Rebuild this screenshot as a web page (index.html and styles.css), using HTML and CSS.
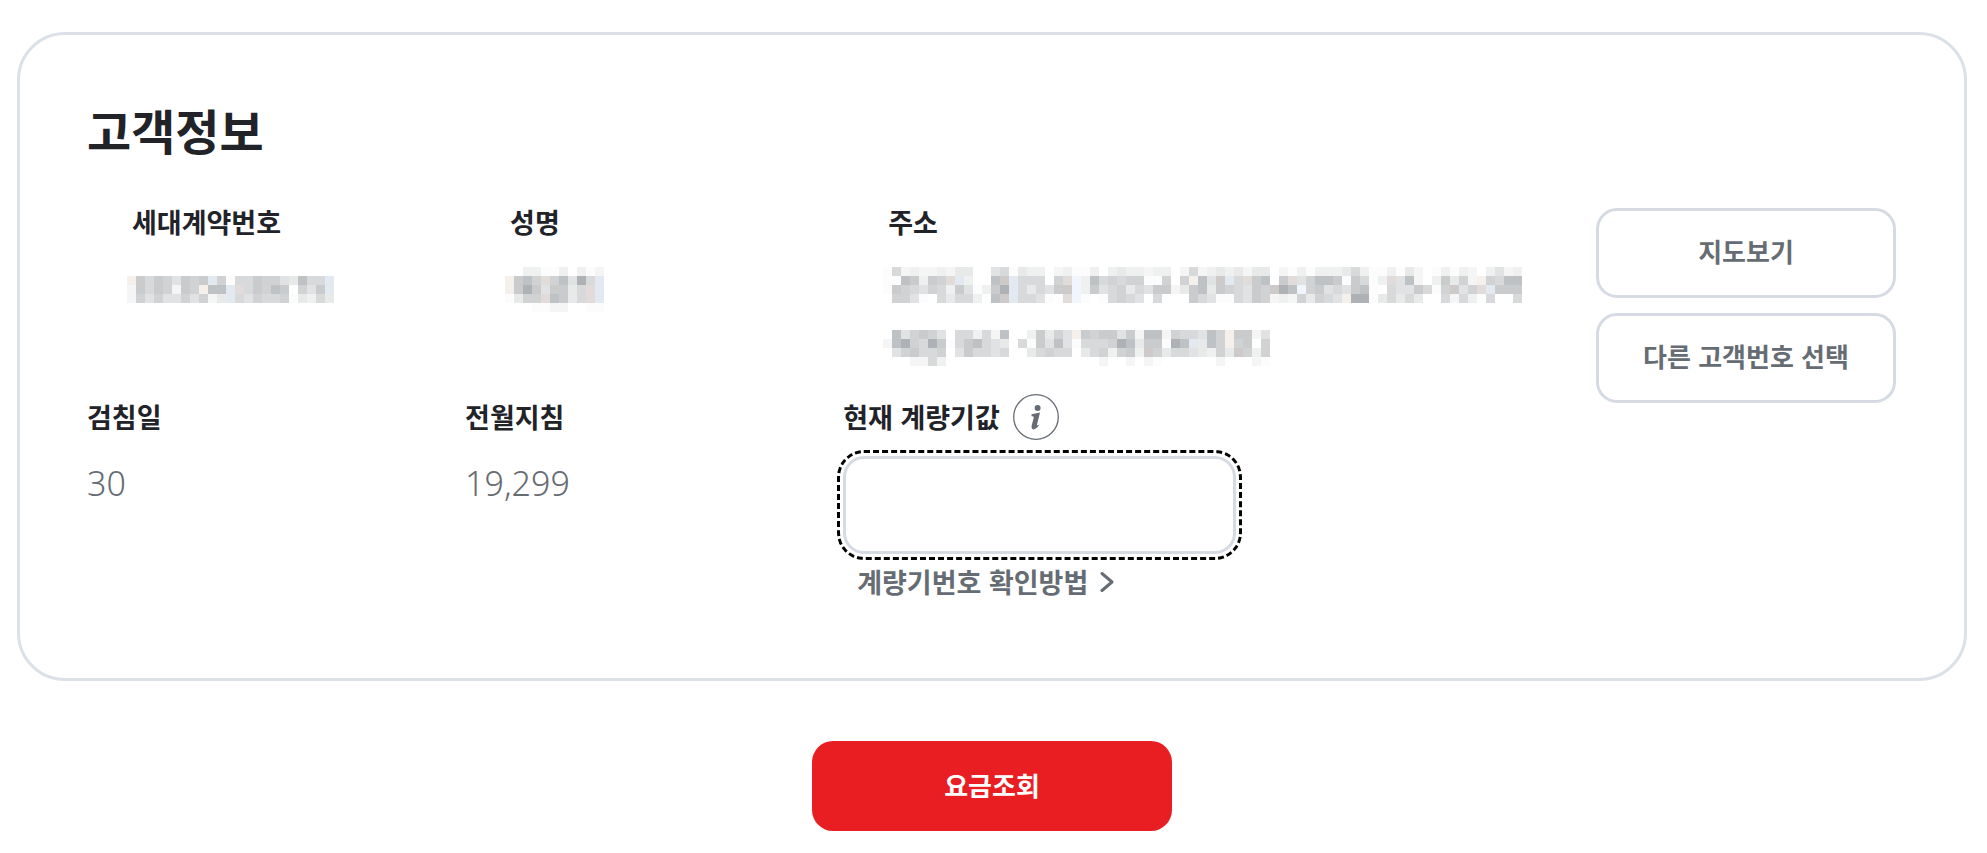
FILE: index.html
```
<!DOCTYPE html>
<html lang="ko">
<head>
    <meta charset="utf-8">
    <title>고객정보</title>
    <meta name="viewport" content="width=device-width, initial-scale=1">
    <link rel="stylesheet" href="styles.css">
</head>
<body>
    <form class="page" action="">
        <section class="card">
            <h1 class="card-title">고객정보</h1>
            <div class="info">
                <div class="item indent">
                    <h2 class="label">세대계약번호</h2>
                    <svg class="mosaic" data-mask="number" aria-hidden="true"></svg>
                </div>
                <div class="item indent">
                    <h2 class="label">성명</h2>
                    <svg class="mosaic" data-mask="name" aria-hidden="true"></svg>
                </div>
                <div class="item indent">
                    <h2 class="label">주소</h2>
                    <svg class="mosaic" data-mask="address" aria-hidden="true"></svg>
                </div>
                <div class="buttons">
                    <button class="btn" type="button">지도보기</button>
                    <button class="btn" type="button">다른 고객번호 선택</button>
                </div>
                <div class="item">
                    <h2 class="label label-tall">검침일</h2>
                    <p class="value">30</p>
                </div>
                <div class="item">
                    <h2 class="label label-tall">전월지침</h2>
                    <p class="value">19,299</p>
                </div>
                <div class="item">
                    <div class="label label-tall">
                        <label for="meter">현재 계량기값</label>
                        <button class="info-btn" type="button">
                            <svg width="46" height="46" viewBox="0 0 46 46" aria-hidden="true">
                                <circle cx="23" cy="23" r="22.3" fill="none" stroke="#666c73" stroke-width="1.3"/>
                                <circle cx="24.6" cy="14" r="3" fill="#666c73"/>
                                <path d="M18.5 20.2L27 18.6 24 30.6Q24 32.2 26.4 30.6 23.6 35.4 20.4 35.4 17.8 35 18.8 31L20.8 23.4Q21 22 18.5 22.2z" fill="#666c73"/>
                            </svg>
                        </button>
                    </div>
                    <input class="meter" id="meter" type="text">
                    <a class="guide" href="#">계량기번호 확인방법
                        <svg width="16" height="22" viewBox="0 0 16 22" aria-hidden="true">
                            <path d="M2 2.5L12 11 2 19.5" fill="none" stroke="#666c73" stroke-width="3" stroke-linecap="round" stroke-linejoin="round"/>
                        </svg>
                    </a>
                </div>
            </div>
        </section>
        <button class="submit" type="button">요금조회</button>
    </form>
    <script src="mask.js"></script>
</body>
</html>
```
FILE: styles.css
```
* {
    box-sizing: border-box;
}
body {
    margin: 0;
    background: #fff;
    color: #222329;
    font-family: "Noto Sans CJK KR", sans-serif;
    font-size: 27px;
    font-weight: 700;
}
h1, h2, p {
    margin: 0;
}
button, input {
    font: inherit;
    color: inherit;
}
.page {
    padding: 32px 20px 22px 17px;
}
.card {
    border: 3px solid #dce1e7;
    border-radius: 48px;
    padding: 58px 68px 72px 67px;
}
.card-title {
    margin-bottom: 36px;
    font-size: 48px;
    line-height: 72px;
}
.info {
    display: grid;
    grid-template-columns: 20.9% 20.9% 1fr 300px;
    row-gap: 28px;
}
.indent {
    padding-left: 45px;
}
.label {
    font-size: 27px;
    font-weight: 700;
    line-height: 42px;
}
.label-tall {
    display: flex;
    align-items: center;
    gap: 13px;
    height: 46px;
}
.mosaic {
    display: block;
    margin: 24px 0 0 -5px;
}
.value {
    margin-top: 19px;
    color: #666c73;
    font-family: "Noto Sans", "Open Sans", sans-serif;
    font-size: 34px;
    font-weight: 300;
    line-height: 48px;
}
.buttons {
    grid-row: span 2;
    display: flex;
    flex-direction: column;
    gap: 15px;
    padding-top: 7px;
}
.btn {
    height: 90px;
    padding: 0 0 6px;
    border: 3px solid #d5dae3;
    border-radius: 21px;
    background: #fff;
    color: #666c73;
    font-size: 26px;
}
.info-btn {
    padding: 0;
    border: 0;
    background: none;
    line-height: 0;
}
.meter {
    display: block;
    width: 393px;
    height: 98px;
    margin-top: 16px;
    padding: 0 20px;
    border: 3px solid #d5dae3;
    border-radius: 21px;
    background: #fff;
    outline: 3px dashed #000;
    outline-offset: 3px;
}
.guide {
    display: flex;
    align-items: center;
    gap: 12px;
    margin-top: 4px;
    padding-left: 14px;
    color: #666c73;
    line-height: 48px;
    text-decoration: none;
}
.submit {
    display: block;
    width: 360px;
    height: 90px;
    margin: 60px auto 0;
    padding: 0 0 4px;
    border: 0;
    border-radius: 21px;
    background: #e91e23;
    color: #fff;
    font-size: 26px;
}
```
FILE: mask.js
```
// personal data is masked with 9px blocks, one character per block
var CELL = 9;
var COLORS = {
    0: '#fcfcfc', 1: '#f5f5f5', 2: '#eff0f0', 3: '#e8e9e9', 4: '#e0e2e3',
    5: '#d8d9da', 6: '#d0d2d4', 7: '#c9cbcd', 8: '#bfc2c5', 9: '#aeb1b5',
    b: '#e2e9f0', g: '#cfcaca', p: '#f6f0ec', r: '#e1dcda', w: '#f0f5fe'
};
var MASKS = {
    number: [
        '',
        'p75764767b605576643855b',
        '17576176p88br57687.647b',
        '16464464613b54655603253'
    ],
    name: [
        '..22002.201',
        'p786r68495b',
        'p79747735rb',
        '0366r8735rb',
        '...0011..00'
    ],
    address: [
        '0512112133..450322.12002.2322122.1512323133.1020222352002031.02021.2412',
        '0087276rb2..8gb555.6rw2856566006.6p84gb5r78.7r4688707502r481.27361p6588',
        '07654652740279b53547gw274563547713783765476g98w67454780.5447506g46rb777',
        '.6640.53552.8gb5540.rw0.05654.5...75400547612163654p99035353..515205..5',
        '',
        '',
        '',
        '.846764.552518..27364p7677471881655486p7714',
        '18965970578543.5074840555698377098b386p67.6',
        '.467556.475545..35655.3562672g635543263g626',
        '...1152.................1..1.10......1...10'
    ]
};
var svgs = document.querySelectorAll('.mosaic');
for (var i = 0; i < svgs.length; i++) {
    var rows = MASKS[svgs[i].getAttribute('data-mask')];
    var html = '';
    var cols = 0;
    for (var y = 0; y < rows.length; y++) {
        cols = Math.max(cols, rows[y].length);
        for (var x = 0; x < rows[y].length; x++) {
            var color = COLORS[rows[y][x]];
            if (color)
                html += '<rect x="' + x * CELL + '" y="' + y * CELL + '" width="9" height="9" fill="' + color + '"/>';
        }
    }
    svgs[i].setAttribute('width', cols * CELL);
    svgs[i].setAttribute('height', rows.length * CELL);
    svgs[i].innerHTML = html;
}
```
